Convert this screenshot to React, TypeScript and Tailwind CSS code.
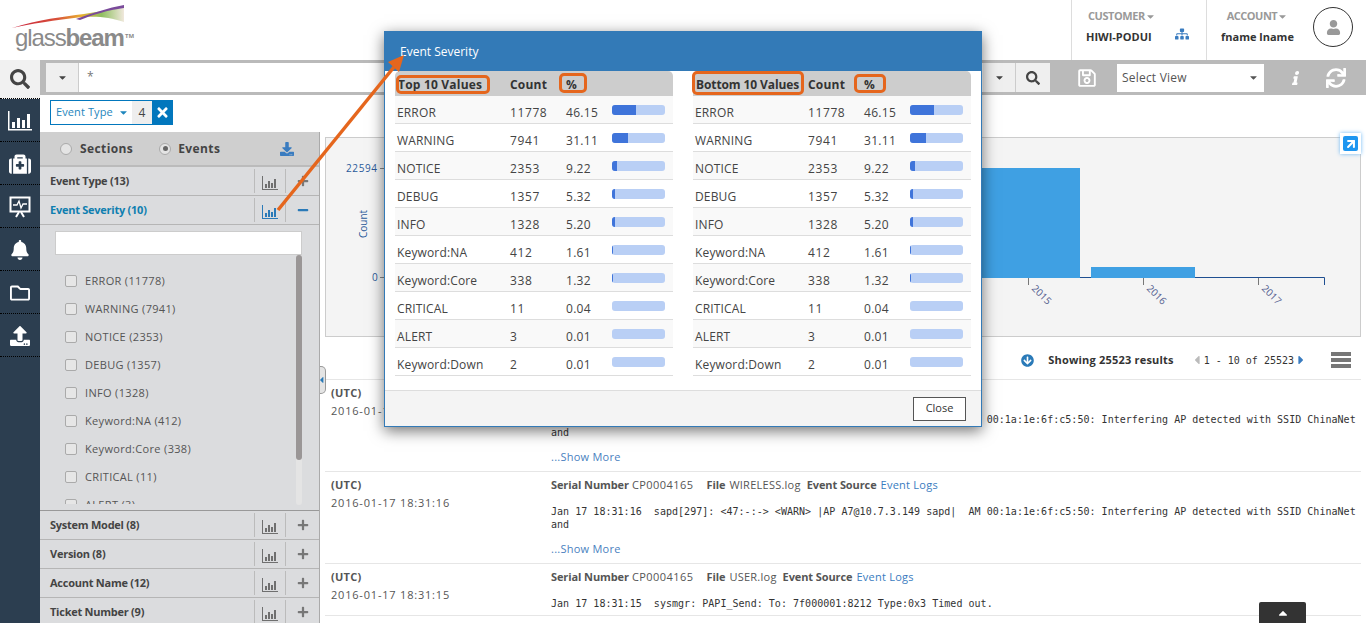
import { FaArrowCircleDown, FaBell, FaCaretDown, FaCaretLeft, FaCaretRight, FaCaretUp, FaDownload, FaInfo, FaMedkit, FaMinus, FaPlus, FaRegFolder, FaRegSave, FaSearch, FaSitemap, FaSync, FaTimes, FaUpload, FaUser } from 'react-icons/fa'
import { ArrowUpRight } from 'lucide-react'

const values = [
  { name: 'ERROR', count: 11778, pct: '46.15' },
  { name: 'WARNING', count: 7941, pct: '31.11' },
  { name: 'NOTICE', count: 2353, pct: '9.22' },
  { name: 'DEBUG', count: 1357, pct: '5.32' },
  { name: 'INFO', count: 1328, pct: '5.20' },
  { name: 'Keyword:NA', count: 412, pct: '1.61' },
  { name: 'Keyword:Core', count: 338, pct: '1.32' },
  { name: 'CRITICAL', count: 11, pct: '0.04' },
  { name: 'ALERT', count: 3, pct: '0.01' },
  { name: 'Keyword:Down', count: 2, pct: '0.01' },
]

const log1 = 'Jan 17 18:31:16  sapd[297]: <47:-:-> <WARN> |AP A7@10.7.3.149 sapd|  AM 00:1a:1e:6f:c5:50: Interfering AP detected with SSID ChinaNet and'

function BarsIcon({ color = '#6f6f6f' }: { color?: string }) {
  return (
    <svg width="16" height="14" viewBox="0 0 16 14" fill={color}>
      <rect x="0" y="0" width="1" height="13" />
      <rect x="0" y="13" width="16" height="1" />
      <rect x="3" y="8" width="2" height="4" />
      <rect x="6" y="5" width="2" height="7" />
      <rect x="9" y="7" width="2" height="5" />
      <rect x="12" y="3" width="2" height="9" />
    </svg>
  )
}

function Logo() {
  return (
    <div className="relative w-[140px] h-[60px] shrink-0">
      <svg className="absolute left-0 top-0" width="140" height="30" viewBox="0 0 140 30">
        <defs>
          <linearGradient id="sw" x1="0" x2="1" y1="0" y2="0">
            <stop offset="0" stopColor="#c8203c" />
            <stop offset="0.4" stopColor="#d8503a" />
            <stop offset="0.62" stopColor="#e8b030" />
            <stop offset="0.8" stopColor="#8fbf60" />
            <stop offset="1" stopColor="#f0e8dc" />
          </linearGradient>
        </defs>
        <path d="M12 28 C40 19 62 17 84 14 C98 12 112 9 124 8 L124 22 C110 17 98 16 82 17 C55 20 30 24 12 28Z" fill="url(#sw)" />
        <path d="M76 19 C92 13 108 8 124 5 L124 8 C108 10 92 15 80 20Z" fill="#7a4a9a" />
      </svg>
      <div className="absolute left-[15px] top-[24px] text-[24px] leading-[28px] tracking-[-1.1px] text-[#8a8a8a] font-['Liberation_Sans',sans-serif]">
        glass<span className="font-bold">beam</span>
      </div>
      <span className="absolute left-[125px] top-[33px] text-[6px] leading-[7px] font-bold text-[#8a8a8a]">TM</span>
    </div>
  )
}

function Header() {
  return (
    <div className="h-[60px] flex bg-white">
      <Logo />
      <div className="flex-1" />
      <div className="w-[135px] border-l border-[#ddd] flex flex-col pl-[14px] pt-[9px]">
        <div className="flex items-center text-[11px] leading-[14px] font-bold tracking-[-0.45px] text-[#999] pl-[2px]">CUSTOMER<FaCaretDown className="text-[11px]" /></div>
        <div className="flex items-center mt-[6px] text-[11px] leading-[16px] font-bold text-[#333]">
          <span>HIWI-PODUI</span>
          <FaSitemap className="ml-[23px] -mt-[6px] text-[14px] text-[#3a7cc0]" />
        </div>
      </div>
      <div className="w-[160px] border-l border-[#ddd] flex pl-[13px] pt-[9px]">
        <div className="flex flex-col items-center w-[75px]">
          <div className="flex items-center text-[11px] leading-[14px] font-bold tracking-[-0.5px] text-[#999]">ACCOUNT<FaCaretDown className="text-[11px]" /></div>
          <div className="mt-[6px] text-[11px] leading-[16px] font-bold text-[#333] whitespace-nowrap">fname lname</div>
        </div>
        <div className="ml-[18px] -mt-[2px] w-[40px] h-[40px] rounded-full border border-[#333] flex items-center justify-center">
          <FaUser className="text-[15px] text-[#999]" />
        </div>
      </div>
    </div>
  )
}

function Rail() {
  const cell = 'h-[43px] pt-[2px] flex items-center justify-center border-b border-dotted border-black text-white'
  return (
    <div className="w-[40px] shrink-0 bg-[#2c3e50] flex flex-col">
      <div className="h-[39px] bg-[#f1f1f1] flex items-center justify-center border-b border-dotted border-black">
        <FaSearch className="text-[20px] text-[#444]" />
      </div>
      <div className={cell}>
        <svg width="24" height="20" viewBox="0 0 24 20" fill="white">
          <rect x="0" y="0" width="1.5" height="19" />
          <rect x="0" y="18" width="24" height="1.5" />
          <rect x="4" y="11" width="3" height="6" />
          <rect x="9" y="7" width="3" height="10" />
          <rect x="14" y="9" width="3" height="8" />
          <rect x="19" y="3" width="3" height="14" />
        </svg>
      </div>
      <div className={cell}><FaMedkit className="text-[22px]" /></div>
      <div className={cell}>
        <svg width="22" height="22" viewBox="0 0 22 22" fill="none" stroke="white">
          <rect x="1.5" y="1.5" width="19" height="14" strokeWidth="2" />
          <path d="M4 9h4l2-4 2 7 2-4h4" strokeWidth="1.3" />
          <path d="M7 21l3-5M15 21l-3-5" strokeWidth="2" />
        </svg>
      </div>
      <div className={cell}><FaBell className="text-[20px]" /></div>
      <div className={cell}><FaRegFolder className="text-[20px]" /></div>
      <div className={cell}><FaUpload className="text-[20px]" /></div>
    </div>
  )
}

function SearchBar() {
  return (
    <div className="h-[35px] bg-[#bababa] flex items-center">
      <div className="ml-[6px] w-[1004px] h-[29px] flex">
        <div className="w-[33px] bg-[#efefef] flex items-center justify-center border-r border-[#ccc]"><FaCaretDown className="text-[11px] text-[#444]" /></div>
        <div className="flex-1 bg-white pl-[8px] text-[12px] leading-[27px] text-[#777]">*</div>
        <div className="w-[33px] bg-[#efefef] flex items-center justify-center border-r border-[#ccc]"><FaCaretDown className="text-[11px] text-[#444]" /></div>
        <div className="w-[34px] bg-[#efefef] flex items-center justify-center"><FaSearch className="text-[14px] text-[#444]" /></div>
      </div>
      <FaRegSave className="ml-[27px] text-[20px] text-white" />
      <div className="ml-[20px] w-[147px] h-[28px] bg-white flex items-center justify-between px-[5px] text-[12px] tracking-[0.2px] text-[#555]">
        <span>Select View</span>
        <FaCaretDown className="text-[11px] text-[#555]" />
      </div>
      <FaInfo className="ml-[25px] text-[14px] text-white -skew-x-12" />
      <FaSync className="ml-[23px] text-[20px] text-white" />
    </div>
  )
}

function FacetRow({ label, active, open }: { label: string; active?: boolean; open?: boolean }) {
  return (
    <div className="h-[29px] shrink-0 flex items-center border-b border-[#b5b5b5] bg-[#dbdcde]">
      <div className={`flex-1 pl-[10px] text-[11px] font-bold tracking-[-0.25px] ${active ? 'text-[#0f7fb0]' : 'text-[#444]'}`}>{label}</div>
      <div className="w-[32px] h-[24px] border-x border-[#bbb] flex items-center justify-center pt-[3px]">
        <BarsIcon color={active ? '#2a7ab8' : '#6f6f6f'} />
      </div>
      <div className="w-[33px] flex items-center justify-center text-[#777] text-[12px]">
        {open ? <FaMinus className="text-[#2a7ab8]" /> : <FaPlus />}
      </div>
    </div>
  )
}

function FilterPanel() {
  return (
    <div className="w-[280px] shrink-0 flex flex-col bg-[#dbdcde] border-r border-[#aaa] overflow-hidden">
      <div className="h-[35px] shrink-0 flex items-center bg-[#cfcfcf] border-b-2 border-[#bbb] text-[12px] font-bold tracking-[0.4px] text-[#444]">
        <span className="ml-[20px] w-[12px] h-[12px] rounded-full border border-[#aaa] bg-[#e4e4e4]" />
        <span className="ml-[8px]">Sections</span>
        <span className="ml-[26px] w-[12px] h-[12px] rounded-full border border-[#aaa] bg-[#e4e4e4] flex items-center justify-center">
          <span className="w-[5px] h-[5px] rounded-full bg-[#666]" />
        </span>
        <span className="ml-[7px]">Events</span>
        <FaDownload className="ml-[60px] text-[14px] text-[#3a7cc0]" />
      </div>
      <FacetRow label="Event Type (13)" />
      <FacetRow label="Event Severity (10)" active open />
      <div className="relative h-[285px] shrink-0">
        <div className="ml-[15px] mt-[6px] w-[247px] h-[24px] bg-white border border-[#ccc]" />
        <div className="mt-[12px] h-[237px] overflow-hidden flex flex-col">
          {values.slice(0, 9).map(v => (
            <div key={v.name} className="h-[28px] shrink-0 flex items-center pl-[25px] text-[11px] tracking-[0.33px] text-[#555]">
              <span className="w-[12px] h-[12px] rounded-[2px] border border-[#aaa] bg-[#e6e6e6]" />
              <span className="ml-[8px]">{v.name} ({v.count})</span>
            </div>
          ))}
        </div>
        <div className="absolute left-[256px] top-[30px] w-[6px] h-[250px] rounded-full bg-[#e4e4e4]">
          <div className="w-[6px] h-[205px] rounded-full bg-[#9a9696]" />
        </div>
      </div>
      <div className="border-t border-[#999]">
        <FacetRow label="System Model (8)" />
        <FacetRow label="Version (8)" />
        <FacetRow label="Account Name (12)" />
        <FacetRow label="Ticket Number (9)" />
      </div>
    </div>
  )
}

function Chart() {
  const ticks = [
    { x: 702, label: '2015' },
    { x: 817, label: '2016' },
    { x: 932, label: '2017' },
  ]
  return (
    <div className="relative h-[200px] bg-[#f4f4f4] border border-[#ccc]">
      <svg width="1034" height="198" viewBox="0 0 1034 198">
        <text x="20" y="34" fontSize="10" fill="#2a5a9a" letterSpacing="0.6">22594</text>
        <path d="M54 30.5h5" stroke="#888" />
        <text x="46" y="143" fontSize="10" fill="#2a5a9a">0</text>
        <path d="M54 139.5h5" stroke="#888" />
        <text transform="translate(41 100) rotate(-90)" fontSize="10" fill="#2a5a9a">Count</text>
        <path d="M59 139.5H998.5V147" stroke="#1f4f91" fill="none" />
        <rect x="560" y="30" width="194" height="110" fill="#3fa0e3" />
        <rect x="765" y="129" width="104" height="11" fill="#3fa0e3" />
        {ticks.map(t => (
          <g key={t.label}>
            <path d={`M${t.x}.5 140v7`} stroke="#777" />
            <text transform={`translate(${t.x + 3} 151) rotate(45)`} fontSize="10" fill="#555f8f">{t.label}</text>
          </g>
        ))}
      </svg>
      <div className="absolute right-[-1px] top-[-5px] w-[21px] h-[21px] bg-white shadow-[0_0_4px_#6db8f5] flex items-center justify-center">
        <span className="w-[15px] h-[15px] rounded-[2px] bg-[#1e96f0] flex items-center justify-center">
          <ArrowUpRight size={14} strokeWidth={3.5} className="text-white" />
        </span>
      </div>
    </div>
  )
}

function ResultRow({ time, file, log, more }: { time: string; file: string; log: string; more?: boolean }) {
  return (
    <div className="flex pt-[4px] pb-[5px] pl-[6px] pr-[2px] border-b border-[#e6e6e6] text-[11px] tracking-[0.25px] text-[#555]">
      <div className="w-[220px] shrink-0">
        <div className="h-[18px] leading-[18px] font-bold">(UTC)</div>
        <div className="h-[18px] leading-[18px] tracking-[0.8px]">{time}</div>
      </div>
      <div className="flex-1 min-w-0">
        <div className="h-[18px] leading-[18px] flex whitespace-nowrap">
          <b className="tracking-[-0.1px]">Serial Number</b><span className="ml-[3px] tracking-[0.45px]">CP0004165</span>
          <b className="ml-[13px] tracking-[-0.1px]">File</b><span className="ml-[4px]">{file}</span>
          <b className="ml-[6px] tracking-[-0.1px]">Event Source</b><span className="ml-[4px] text-[#3a7cc0]">Event Logs</span>
        </div>
        <div className="mt-[11px] text-[10px] leading-[13px] tracking-[0.03px] text-[#333] font-['DejaVu_Sans_Mono',monospace] whitespace-pre-wrap break-words">{log}</div>
        {more && <div className="mt-[9px] h-[18px] leading-[18px] text-[#4a7fc0]">...Show More</div>}
      </div>
    </div>
  )
}

function Results() {
  return (
    <div className="relative flex-1 min-w-0 px-[5px] pt-[5px] bg-white">
      <Chart />
      <div className="h-[43px] pt-[4px] flex items-center justify-end border-b border-[#e6e6e6] pr-[10px]">
        <FaArrowCircleDown className="text-[13px] text-[#2a7ab8]" />
        <span className="ml-[14px] text-[11px] font-bold tracking-[0.2px] text-[#333]">Showing 25523 results</span>
        <FaCaretLeft className="ml-[16px] text-[14px] text-[#bbb]" />
        <span className="text-[10px] text-[#333] font-['DejaVu_Sans_Mono',monospace]">1 - 10 of 25523</span>
        <FaCaretRight className="text-[14px] text-[#3a7cc0]" />
        <div className="ml-[23px] w-[20px] flex flex-col gap-[2px]">
          <span className="h-[4px] bg-[#777]" /><span className="h-[4px] bg-[#777]" /><span className="h-[4px] bg-[#777]" />
        </div>
      </div>
      <ResultRow time="2016-01-17 18:31:16" file="WIRELESS.log" log={log1} more />
      <ResultRow time="2016-01-17 18:31:16" file="WIRELESS.log" log={log1} more />
      <ResultRow time="2016-01-17 18:31:15" file="USER.log" log="Jan 17 18:31:15  sysmgr: PAPI_Send: To: 7f000001:8212 Type:0x3 Timed out." />
      <div className="absolute left-[939px] bottom-0 w-[47px] h-[21px] bg-[#333] rounded-t-[2px] flex items-center justify-center">
        <FaCaretUp className="text-[14px] text-white" />
      </div>
      <div className="absolute left-0 top-[234px] w-[6px] h-[28px] rounded-r-[5px] border border-l-0 border-[#999] bg-[#e4e4e4] flex items-center">
        <FaCaretLeft className="text-[10px] text-[#2a7ab8] -ml-[2px]" />
      </div>
    </div>
  )
}

function ValueTable({ title, titleClass, titleBox, pctBox }: { title: string; titleClass: string; titleBox: string; pctBox: string }) {
  return (
    <div className="w-[278px]">
      <div className="relative h-[25px] pt-[2px] flex items-center bg-[#cdcdcd] rounded-t-[5px] text-[12px] font-bold tracking-[0.2px] text-[#333]">
        <span className={`w-[115px] pl-[3px] whitespace-nowrap ${titleClass}`}>{title}</span>
        <span className="w-[56px]">Count</span>
        <span>%</span>
        <span className={`absolute border-[3px] border-[#e5661d] rounded-[5px] ${titleBox}`} />
        <span className={`absolute border-[3px] border-[#e5661d] rounded-[5px] ${pctBox}`} />
      </div>
      {values.map((v, i) => (
        <div key={v.name} className={`h-[28px] pt-[6px] flex items-center border-b border-[#ddd] text-[12px] text-[#444] ${i % 2 === 0 ? 'bg-[#f9f9f9]' : 'bg-white'}`}>
          <span className="w-[115px] pl-[2px] tracking-[0.15px]">{v.name}</span>
          <span className="w-[56px] tracking-[0.6px]">{v.count}</span>
          <span className="w-[46px] tracking-[0.3px]">{v.pct}</span>
          <span className="w-[53px] h-[10px] -mt-[6px] rounded-[3px] bg-[#b9cff5] overflow-hidden">
            <span className="block h-full bg-[#3f74da]" style={{ width: `${v.pct}%` }} />
          </span>
        </div>
      ))}
    </div>
  )
}

function Modal() {
  return (
    <div className="absolute left-[384px] top-[31px] w-[598px] h-[396px] border border-[#337ab7] bg-white shadow-[0_4px_14px_rgba(0,0,0,0.55)] flex flex-col">
      <div className="h-[39px] shrink-0 bg-[#337ab7] flex items-center pl-[15px] text-[12px] text-white">Event Severity</div>
      <div className="flex-1 flex gap-[20px] pl-[10px]">
        <ValueTable title="Top 10 Values" titleClass="tracking-[0.2px]" titleBox="left-[1px] top-[4px] w-[94px] h-[19px]" pctBox="left-[164px] top-[2px] w-[28px] h-[20px]" />
        <ValueTable title="Bottom 10 Values" titleClass="tracking-[-0.1px]" titleBox="left-[-1px] top-[0px] w-[112px] h-[24px]" pctBox="left-[161px] top-[3px] w-[32px] h-[19px]" />
      </div>
      <div className="h-[36px] shrink-0 bg-[#f4f4f4] border-t border-[#ddd] flex items-center justify-end pr-[15px]">
        <button className="w-[53px] h-[24px] bg-white border border-[#555] text-[11px] text-[#333]">Close</button>
      </div>
    </div>
  )
}

export default function App() {
  return (
    <div className="relative w-[1366px] h-[623px] overflow-hidden bg-white font-['Open_Sans',sans-serif]">
      <Header />
      <div className="flex h-[563px]">
        <Rail />
        <div className="flex-1 min-w-0 flex flex-col">
          <SearchBar />
          <div className="h-[37px] shrink-0 pl-[10px] pt-[5px]">
            <div className="flex w-[123px] h-[25px] border border-[#0277bd] text-[11px]">
              <div className="w-[81px] flex items-center pl-[5px] tracking-[0.1px] text-[#1f86bd] whitespace-nowrap">Event Type<FaCaretDown className="ml-[5px] text-[11px]" /></div>
              <div className="w-[20px] bg-[#eee] flex items-center justify-center text-[12px] text-[#444]">4</div>
              <div className="flex-1 bg-[#0277bd] flex items-center justify-center"><FaTimes className="text-[15px] text-white" /></div>
            </div>
          </div>
          <div className="flex-1 min-h-0 flex">
            <FilterPanel />
            <Results />
          </div>
        </div>
      </div>
      <Modal />
      <svg className="absolute left-0 top-0 pointer-events-none" width="1366" height="623" viewBox="0 0 1366 623">
        <path d="M278 210L394 67" stroke="#e5661d" strokeWidth="3.5" />
        <path d="M404 55L388 62L399 72Z" fill="#e5661d" />
      </svg>
    </div>
  )
}
